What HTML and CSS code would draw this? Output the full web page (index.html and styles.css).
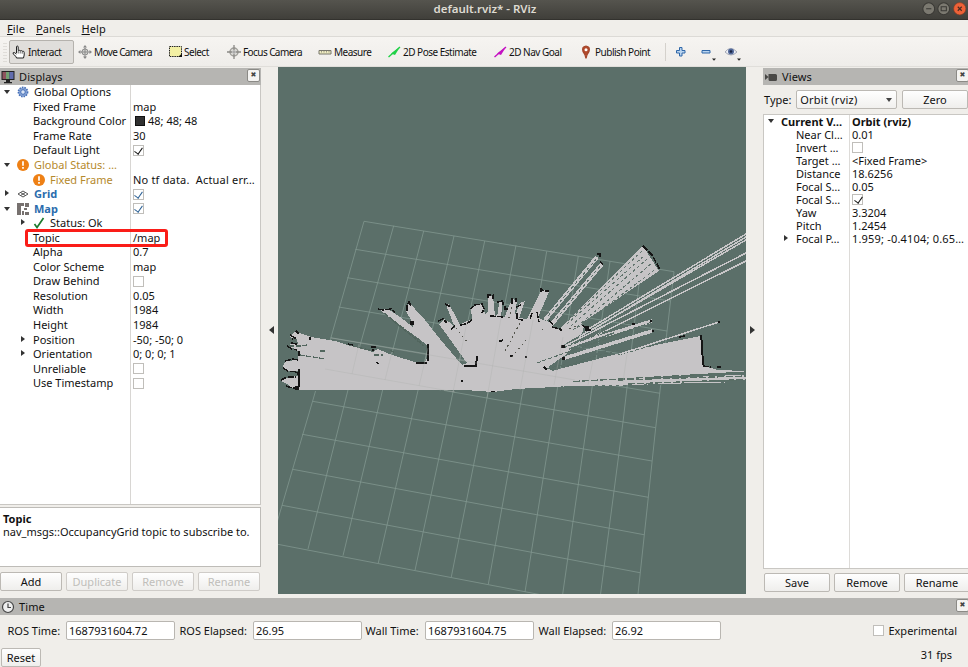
FILE: index.html
```html
<!DOCTYPE html>
<html lang="en">
<head>
<meta charset="utf-8">
<title>default.rviz* - RViz</title>
<link rel="stylesheet" href="styles.css">
</head>
<body>
<div class="window">
  <header class="titlebar">
    <span class="caption">default.rviz* - RViz</span>
    <div class="winbtns">
      <svg viewBox="0 0 13 13"><circle cx="6.5" cy="6.5" r="5.7" fill="#7b7970" stroke="#3a3935"/><path d="M4 6.5h5" stroke="#3a3935"/></svg>
      <svg viewBox="0 0 13 13"><circle cx="6.5" cy="6.5" r="5.7" fill="#7b7970" stroke="#3a3935"/><path d="M4 4.5h5v4H4z" fill="none" stroke="#3a3935"/></svg>
      <svg viewBox="0 0 13 13"><circle cx="6.5" cy="6.5" r="5.9" fill="#ee6238" stroke="#8b3c22" stroke-width=".6"/><path d="M4.6 4.6l3.8 3.8M8.400 4.600L4.600 8.400" stroke="#4a2c22" stroke-width="1.1"/></svg>
    </div>
  </header>
  <nav class="menubar"><span><u>F</u>ile</span><span><u>P</u>anels</span><span><u>H</u>elp</span></nav>
  <div class="toolbar">
    <i class="grip"></i>
    <div class="tool active"><svg viewBox="0 0 14 14"><path d="M4.500 8V2q0-1 .8-1T6.200 2v3.500q1-.8 2 .3 1.200-.7 2 .4 2-.4 2 1.300v2.500L11.500 13H4.500L4 11.500 1.200 9q-.5-1.800 1-1.500L4.500 9" fill="#fff" stroke="#222"/><path d="M6.200 6v2.500M8.200 6.200v2.300M10.200 6.500v2.200" stroke="#222" stroke-width=".7"/></svg><span>Interact</span></div>
    <div class="tool t2"><svg viewBox="0 0 14 14"><path d="M7 1v12M1 7h12" stroke="#777" stroke-dasharray="1.500 .5"/><path d="M7 0l2 2.500H5zM7 14l2-2.500H5zM0 7l2.500-2v4zM14 7l-2.500-2v4z" fill="#888"/><circle cx="7" cy="7" r="3.100" fill="#d0d0cd" stroke="#888"/><path d="M4.500 7h5M7 4.500v5" stroke="#777" stroke-width=".7"/></svg><span>Move Camera</span></div>
    <div class="tool t3"><svg viewBox="0 0 14 14"><path d="M1.500 1.500h12v10h-12z" fill="#f3f0a4" stroke="#222" stroke-dasharray="1.500 .8"/><path d="M14 8.500V12h-4z" fill="#111"/></svg><span>Select</span></div>
    <div class="tool t4"><svg viewBox="0 0 14 14"><circle cx="7" cy="7" r="4" fill="#deddda" stroke="#a09f9a" stroke-width="1.500"/><circle cx="7" cy="7" r="1.800" fill="#aaa"/><path d="M7 0v5M7 9v5M0 7h5M9 7h5" stroke="#8a8985" stroke-width="1.300"/></svg><span>Focus Camera</span></div>
    <div class="tool t5"><svg viewBox="0 0 14 14"><path d="M1 5.500h12v3.500H1z" fill="#f0edc2" stroke="#77766b"/><path d="M3.500 6v1.500M6 6v1.500M8.500 6v1.500M11 6v1.500" stroke="#77766b" stroke-width=".7"/></svg><span>Measure</span></div>
    <div class="tool t6"><svg viewBox="0 0 14 14"><path d="M1.500 12L13 2" stroke="#20d147" stroke-width="1.400"/><path d="M4 8.500L13 2 8 10z" fill="#20d147"/></svg><span>2D Pose Estimate</span></div>
    <div class="tool t7"><svg viewBox="0 0 14 14"><path d="M1.500 12L13 2" stroke="#c411c2" stroke-width="1.400"/><path d="M4 8.500L13 2 8 10z" fill="#c411c2"/></svg><span>2D Nav Goal</span></div>
    <div class="tool t8"><svg viewBox="0 0 14 14"><path d="M7 13.500Q6.500 9.500 4 6.500 2.500 1.500 7 1q4.500.5 3 5.500Q7.500 9.500 7 13.500" fill="#b34a2c" stroke="#a5452a" stroke-width="1.200"/><circle cx="7" cy="4.700" r="1.500" fill="#fff"/></svg><span>Publish Point</span></div>
    <i class="sep"></i>
    <svg class="mini" viewBox="0 0 12 12"><path d="M4.500 1.500h2.500v3h3v2.500H7v3H4.500V7h-3V4.500h3z" fill="#b9d4ef" stroke="#2f67a8"/></svg>
    <svg class="mini m2" viewBox="0 0 16 18"><path d="M1.500 7.500h8V10h-8z" fill="#b9d4ef" stroke="#2f67a8"/><path d="M11.500 15.500h4l-2 2.200z" fill="#222"/></svg>
    <svg class="mini m3" viewBox="0 0 18 18"><path d="M1 9q5.500-7 12 0-6 6-12 0z" fill="#eef1f8" stroke="#a5a9b5"/><circle cx="7" cy="8.500" r="3" fill="#52699a"/><circle cx="7" cy="8.500" r="1.300" fill="#1c2543"/><path d="M13 15.500h4l-2 2.200z" fill="#222"/></svg>
  </div>

  <main class="body">
    <section class="displays">
      <div class="dockhead">
        <svg viewBox="0 0 14 14"><path d="M.5 1h13v9H.5z" fill="#222"/><path d="M1.500 2h4v7h-4z" fill="#8e545e"/><path d="M5 2h3.500v7H5z" fill="#72a272"/><path d="M8.500 2h4v7h-4z" fill="#616cae"/><path d="M5 10h4v2H5zM3 12h8v1.300H3z" fill="#222"/></svg>
        <span>Displays</span><b class="close"></b>
      </div>
      <div class="tree dtree">
        <div class="row"><div class="k l0"><i class="ar dn"></i><svg class="ic" viewBox="0 0 12 12"><circle cx="6" cy="6" r="4.600" fill="#8aa6d6" stroke="#456fb8" stroke-width="1.600" stroke-dasharray="1.500 1"/><circle cx="6" cy="6" r="2.300" fill="#dbe5f5" stroke="#456fb8"/></svg>Global Options</div><div class="v"></div></div>
        <div class="row"><div class="k l1">Fixed Frame</div><div class="v">map</div></div>
        <div class="row"><div class="k l1">Background Color</div><div class="v"><i class="swatch"></i>48; 48; 48</div></div>
        <div class="row"><div class="k l1">Frame Rate</div><div class="v">30</div></div>
        <div class="row"><div class="k l1">Default Light</div><div class="v"><i class="cb on"></i></div></div>
        <div class="row warn"><div class="k l0"><i class="ar dn"></i><svg class="ic" viewBox="0 0 12 12"><circle cx="6" cy="6" r="6" fill="#ee8015"/><path d="M6 2.200v4.600M6 8v1.800" stroke="#fff" stroke-width="1.700"/></svg>Global Status: …</div><div class="v"></div></div>
        <div class="row"><div class="k l2 warn"><svg class="ic" viewBox="0 0 12 12"><circle cx="6" cy="6" r="6" fill="#ee8015"/><path d="M6 2.200v4.600M6 8v1.800" stroke="#fff" stroke-width="1.700"/></svg>Fixed Frame</div><div class="v wide">No tf data.&nbsp; Actual err…</div></div>
        <div class="row"><div class="k l0 disp"><i class="ar rt"></i><svg class="ic" viewBox="0 0 12 12"><path d="M1 6l5-3 5 3-5 3zM3.500 4.500l5 3M8.500 4.500l-5 3" fill="none" stroke="#555"/></svg>Grid</div><div class="v"><i class="cb on blue"></i></div></div>
        <div class="row"><div class="k l0 disp"><i class="ar dn"></i><svg class="ic" viewBox="0 0 12 12"><path d="M0 0h7v3H4v3H0zM8 0h4v4H8zM0 6h4v6H0zM5 8h2v4H5zM7 5h3v2H7zM8 9h4v3H8z" fill="#77716f"/></svg>Map</div><div class="v"><i class="cb on blue"></i></div></div>
        <div class="row"><div class="k l2"><i class="ar rt in"></i><svg class="ic" viewBox="0 0 12 12"><path d="M1.500 7l2.500 3.500L10.500 1" fill="none" stroke="#1c7a2e" stroke-width="1.700"/></svg>Status: Ok</div><div class="v"></div></div>
        <div class="row"><div class="k l1">Topic</div><div class="v">/map</div><i class="mark"></i></div>
        <div class="row"><div class="k l1">Alpha</div><div class="v">0.7</div></div>
        <div class="row"><div class="k l1">Color Scheme</div><div class="v">map</div></div>
        <div class="row"><div class="k l1">Draw Behind</div><div class="v"><i class="cb"></i></div></div>
        <div class="row"><div class="k l1">Resolution</div><div class="v">0.05</div></div>
        <div class="row"><div class="k l1">Width</div><div class="v">1984</div></div>
        <div class="row"><div class="k l1">Height</div><div class="v">1984</div></div>
        <div class="row"><div class="k l1"><i class="ar rt in"></i>Position</div><div class="v">-50; -50; 0</div></div>
        <div class="row"><div class="k l1"><i class="ar rt in"></i>Orientation</div><div class="v">0; 0; 0; 1</div></div>
        <div class="row"><div class="k l1">Unreliable</div><div class="v"><i class="cb"></i></div></div>
        <div class="row"><div class="k l1">Use Timestamp</div><div class="v"><i class="cb"></i></div></div>
      </div>
      <div class="help"><b>Topic</b><p>nav_msgs::OccupancyGrid topic to subscribe to.</p></div>
      <div class="btns"><span class="btn">Add</span><span class="btn off">Duplicate</span><span class="btn off">Remove</span><span class="btn off">Rename</span></div>
    </section>

    <div class="gutter lgut"><svg viewBox="0 0 5 8"><path d="M5 0v8L0 4z"/></svg></div>

    <svg class="view3d" viewBox="278 67 468 527">
      <g stroke="#82978f" stroke-width=".8" fill="none">
        <path d="M364 221.300L674 271.700M355.300 249.300L670 301M347.300 277.700L667 331M338.700 307L664 361M330.700 337.700L660 393.300M322 369L655.700 427.700M312.700 401.300L652 461M302.300 434.300L648.300 497.300M292.700 469.300L644 534.700M282 505.300L640 572.700M271 543L636 613"/>
        <path d="M364 221.300L322 369 271 543M393.700 225.700L352 374 308 549M423.700 231L385 380 343 555.700M454 236L419 386 378.300 563M484.700 241L453 392 415 570.300M516 245.300L487 398 451.300 577M546.700 251.300L520.500 404 488.300 584.300M578.300 256L554 410 525 592M610 261.300L588 416 562 599M641 266.700L623 422 599 606M674 271.700L655.700 427.700 636 613"/>
      </g>
      <g shape-rendering="crispEdges">
        <g fill="#c6c4c6">
          <!-- swept free space -->
          <path d="M295 331L299 333 311 337 335 341 348 345 373 352 378 349 392 355 415 362 424 363 428 357 428 346 418 338 398 324 380 310 388 309 400 317 413 327 411 320 406 311 409 303 415 309 425 320 440 339 462 365 467 363 439 324 444 319 452 324 457 331 461 324 472 319 471 308 475 304 482 304 485 314 488 312 488 296 493 296 495 316 498 313 499 301 503 302 501 316 505 317 508 308 513 299 517 301 515 313 519 318 527 319 535 312 540 319 550 322 553 328 560 329 566 322 584 326 582 334 563 345 575 345 564 356 548 367 552 371 605 357 640 348 700 336 704 366 718 370 746 371 746 382 660 384 610 386 573 386 518 389 503 391 491 392 465 390 299 390 292 388 287 384 281 381 289 377 298 376 299 371 286 371 283 366 286 361 298 360 299 352 293 348 287 347 291 343 298 344 297 339 289 337Z"/>
          <path d="M446 305l3-1 14 26-6 3zM519 318l6-17-5 2-6 15zM526 321l16-32 7 3-14 32z"/>
          <path d="M556 332L643 246 659 271 583 322 572 333Z"/>
        </g>
        <path d="M568 321L643 250M567 324L645 255M571 326L647 259M573 330L652 263M577 328L656 269" stroke="#62746e" stroke-width="1" stroke-dasharray="3 2.500" fill="none"/>
        <path d="M545 320l52-63M551 325l51-61" stroke="#c8c6c8" stroke-width="4" fill="none"/>
        <path d="M548 316l49-58M556 319l45-54" stroke="#5b6f69" stroke-width="1" stroke-dasharray="3 3"/>
        <path d="M585 331L746 234M579 337L746 240M565 346L746 253M563 352L746 261M590 331L746 237" stroke="#c8c6c8" stroke-width="1.500" fill="none"/>
        <path d="M564 348L652 321M565 358L652 331" stroke="#c8c6c8" stroke-width="3.500"/>
        <path d="M563 348L633 321M574 351L652 322M537 363L640 326M546 369L620 350M550 370l34-9M618 355l40-11" stroke="#586d65" stroke-width="1" stroke-dasharray="4 2"/>
        <path d="M567 353L610 340M569 361L606 351 566 364zM569 349l45-16" stroke="#5b6f69" fill="#5b6f69" stroke-width="1.500"/>
        <path d="M620 354L719 322" stroke="#c8c6c8" stroke-width="1.500"/>
        <path d="M640 378L746 371.500v3L650 379zM650 382.500l96-3v2z" fill="#5b6f69"/>
        <path d="M573 381.500L746 372M618 380L746 376M628 384L746 379.500" stroke="#596e65" stroke-width="1.300" stroke-dasharray="7 2"/>
        <path d="M346 344l27 7 4-4M289 346h12l6-1M300 355l25 4M374 355h9M320 351h7M390 350l5 3M384 313l37 29M392 320l32 26" stroke="#52665e" stroke-width="1.300" stroke-dasharray="5 1.500" fill="none"/>
        <path d="M301 390.500h164l26 2 27-3 55-3 55-1 118-3" stroke="#5b6f69" stroke-width="1.300" stroke-dasharray="3 4" fill="none"/>
        <!-- occupied cells -->
        <g stroke="#151515" stroke-width="1.500" fill="none" stroke-dasharray="6 1.500">
          <path d="M296 331l3 3M290 335l5 3-3 1M287 346l5 3 5 1M291 343l6 1M285 361l8-2 5 1M283 368l5 3 9 1 1 3M281 380l6-3h9M286 386l6 2h6M299 351v5M299 369v6M348 344l5 1M371 347h5"/>
          <path d="M378 309l5 1 8-1 4 3M407 311v-6l2-3 2 4M438 321l5-2 4 4M445 304l4 2 1 3M451 329l4-3M460 325l6-1 6-4M471 309l2-3M474 305l8-1 2 5-2 4M488 298v-3h5v4M497 302l6-1v4M490 316l15 1M508 309h-3v-3M512 304v-5h4v3M516 307l7-3M517 313v6l6 1M532 313l-2 6M537 312l2 10M541 292v-3l3 2h5M549 321l4 3M552 327l8 2 2 2M583 325l4 5h4"/>
          <path d="M643 246l4 4 5 5 5 9 3 6M597 254h3v3M600 262l3 2M651 320v2M652 331h2M679 337l6-1M703 366l8 1M717 367h4M718 322h2"/>
        </g>
        <path d="M416 362.500h11M428 361v-17M464 366h12l1-10M701 335l1 10 1 20M299 373v14M296 387h3M544 367l3 3" stroke="#151515" stroke-width="2" fill="none"/>
        <path d="M410 321h4v4h-4zM499 340h3v2h-3zM461 380h2v2h-2zM502 339h1v2h-1zM376 362l3 1-1 2zM295 386h4v4h-4zM585 326h4v5h-4zM561 345h4v3h-4zM562 357h3v3h-3zM510 355h3v2h-3zM525 356h2v2h-2zM632 323h3v2h-3zM309 337h2v3h-2zM372 349h2v2h-2zM491 391h4v1h-4z" fill="#151515"/>
        <path d="M520 323l-16 30M526 340l-14 17M456 328l12 15M512 307l-4 14M569 329l7-3M543 329l-4 4" stroke="#54554d" stroke-width="1" stroke-dasharray="2 3"/>
      </g>
      <path d="M325 369l130 23M331 338l244 42M352 374l7-30M385 380l7-28M419 386l9-38M453 392l14-70M487 398l14-80M520 390l13-70M554 385l9-48M588 385l5-25M623 382l4-28" stroke="#aeb0ae" stroke-width=".6" opacity=".6" fill="none"/>
    </svg>

    <div class="gutter rgut"><svg viewBox="0 0 5 8"><path d="M0 0v8l5-4z"/></svg></div>

    <section class="views">
      <div class="dockhead">
        <svg viewBox="0 0 14 14"><path d="M4.500 4h7q1.500 0 1.500 1.500v4q0 1.500-1.500 1.500H6q-1.500 0-1.500-1.500zM1 4l3.500 3L1 10z" fill="#494846"/></svg>
        <span>Views</span><b class="close"></b>
      </div>
      <div class="typebar"><label>Type:</label><span class="combo">Orbit (rviz)<i></i></span><span class="btn zero">Zero</span></div>
      <div class="tree vtree">
        <div class="row bold"><div class="k"><i class="ar dn"></i>Current V…</div><div class="v">Orbit (rviz)</div></div>
        <div class="row"><div class="k c">Near Cl…</div><div class="v">0.01</div></div>
        <div class="row"><div class="k c">Invert …</div><div class="v"><i class="cb"></i></div></div>
        <div class="row"><div class="k c">Target …</div><div class="v">&lt;Fixed Frame&gt;</div></div>
        <div class="row"><div class="k c">Distance</div><div class="v">18.6256</div></div>
        <div class="row"><div class="k c">Focal S…</div><div class="v">0.05</div></div>
        <div class="row"><div class="k c">Focal S…</div><div class="v"><i class="cb on"></i></div></div>
        <div class="row"><div class="k c">Yaw</div><div class="v">3.3204</div></div>
        <div class="row"><div class="k c">Pitch</div><div class="v">1.2454</div></div>
        <div class="row"><div class="k c"><i class="ar rt"></i>Focal P…</div><div class="v wide">1.959; -0.4104; 0.65…</div></div>
      </div>
      <div class="btns"><span class="btn">Save</span><span class="btn">Remove</span><span class="btn">Rename</span></div>
    </section>
  </main>

  <section class="time">
    <div class="dockhead">
      <svg viewBox="0 0 14 14"><circle cx="7" cy="7" r="5.500" fill="#eee" stroke="#444" stroke-width="1.200"/><path d="M7 3.500V7.500h3" fill="none" stroke="#444" stroke-width="1.200"/></svg>
      <span>Time</span><b class="close"></b>
    </div>
    <div class="fields">
      <label>ROS Time:</label><span class="input">1687931604.72</span>
      <label>ROS Elapsed:</label><span class="input">26.95</span>
      <label>Wall Time:</label><span class="input">1687931604.75</span>
      <label>Wall Elapsed:</label><span class="input">26.92</span>
      <span class="exp"><i class="cb"></i>Experimental</span>
    </div>
    <div class="foot"><span class="btn">Reset</span><span class="fps">31 fps</span></div>
  </section>
</div>
</body>
</html>
```
FILE: styles.css
```css
* { box-sizing: border-box; }
body { margin: 0; }
.window {
  width: 968px; height: 667px; overflow: hidden;
  display: flex; flex-direction: column;
  background: #f0eeea; color: #111;
  font: 11px/14px "Noto Sans", "Open Sans", sans-serif;
  white-space: nowrap;
}
svg { display: block; flex: none; }
i, b.close { font-style: normal; flex: none; }

.titlebar {
  flex: none; height: 20px; display: flex; align-items: center; position: relative;
  background: linear-gradient(#55544e, #403f3a); border-bottom: 1px solid #33322e;
}
.caption { flex: 1; text-align: center; color: #dfdbd2; font-weight: 600; font-size: 11.500px; padding-left: 2px; line-height: 16px; padding-bottom: 2px; }
.winbtns { position: absolute; right: 2px; top: 2px; display: flex; gap: 2px; }
.winbtns svg { width: 13.500px; height: 13.500px; }

.menubar { flex: none; height: 17px; display: flex; gap: 11px; padding: 2px 0 0 7px; border-bottom: 1px solid #dcdad6; letter-spacing: .1px; }
.menubar u { text-underline-offset: 1px; }

.toolbar {
  flex: none; height: 30px; display: grid; align-items: center;
  grid-template-columns: 9px 69px 90px 59px 91px 69px 106px 86px 86px 10px 25px 24px 20px;
  background: linear-gradient(#f6f4f1, #efedea);
  border-bottom: 1px solid #e0deda;
}
.grip { width: 4px; height: 20px; margin-left: 3px; background: radial-gradient(#c8c5c0 30%, transparent 40%) 0 0/2px 3px; }
.tool { display: flex; align-items: center; gap: 2px; font-size: 10px; letter-spacing: -.5px; height: 24px; }
.tool svg { width: 14px; height: 14px; }
.t2 { letter-spacing: -.62px; }
.t4 { letter-spacing: -.58px; }
.tool.active { width: 65px; padding-left: 2px; border: 1px solid #b5b2ad; border-radius: 2px; background: #e0dedb; letter-spacing: -.4px; }
.sep { width: 1px; height: 18px; background: #d4d1cc; }
.mini { width: 12px; height: 12px; }
.mini.m2 { width: 17px; height: 18px; }
.mini.m3 { width: 18px; height: 18px; }

.body { flex: none; height: 530px; display: grid; grid-template-columns: 261px 17px 468px 17px 205px; }
.dockhead { flex: none; height: 17px; display: flex; align-items: center; padding: 0 0 0 1px; gap: 4px; background: #b6b5b2; position: relative; letter-spacing: .1px; }
.dockhead svg { width: 14px; height: 14px; }
.close { position: absolute; right: 1px; top: 1px; width: 13px; height: 13px; border: 1px solid #8b8a86; border-radius: 2px; background: #f4f3f1; }
.close::after { content: "✖"; font: 7px/11px "DejaVu Sans", sans-serif; display: block; text-align: center; color: #444; }

.displays, .views { display: flex; flex-direction: column; min-width: 0; padding-top: 1px; }
.tree { background: #fff; border: 1px solid #c9c7c3; position: relative; border-left: 0; overflow: hidden; }
.row { display: flex; align-items: center; position: relative; }
.k { flex: none; height: 100%; display: flex; align-items: center; position: relative; }
.v { flex: 1; height: 100%; display: flex; align-items: center; padding-left: 2px; }
.dtree { height: 420px; border-top: 0; background: linear-gradient(#d8d6d3, #d8d6d3) 130px 0/1px 100% no-repeat #fff; }
.dtree .row { height: 14.560px; }
.dtree .k { width: 131px; }
.l0 { padding-left: 17px; gap: 5px; }
.l1 { padding-left: 33px; }
.l2 { padding-left: 33px; gap: 5px; }
.ic { width: 12px; height: 12px; }
.ar { position: absolute; top: 50%; width: 0; height: 0; border: solid transparent; }
.dn { left: 4px; margin-top: -2px; border-width: 4px 3.500px 0; border-top-color: #333; }
.rt { left: 5px; margin-top: -4px; border-width: 3.500px 0 3.500px 4px; border-left-color: #333; }
.in { left: 21px; }
.warn { color: #b5892c; }
.wide { letter-spacing: .19px; }
.disp { color: #2a6cad; font-weight: 700; }
.swatch { width: 10px; height: 10px; background: #303030; border: 1px solid #111; margin: 0 3px 0 2px; }
.cb { width: 11px; height: 11px; border: 1px solid #c0beba; background: #fff; display: block; position: relative; }
.dtree .cb { margin-left: -.5px; }
.cb.on::after { content: ""; position: absolute; left: 2.500px; top: 0; width: 4px; height: 7px; border: solid #111; border-width: 0 1.600px 1.600px 0; transform: rotate(35deg); }
.cb.blue::after { border-color: #2a5f94; }
.mark { position: absolute; left: 25px; top: -1.500px; width: 143px; height: 18px; border: 3px solid #fa1d18; border-radius: 3px; z-index: 2; }
.help { height: 60px; margin-top: 2px; padding: 4px 2px 0 3px; background: #fff; border: 1px solid #bebcb8; border-left: 0; line-height: 13px; }
.help b { display: block; line-height: 13px; }
.help p { margin: 0; }
.btns { display: flex; }
.btn { display: flex; align-items: center; justify-content: center; height: 19px; flex: none; background: linear-gradient(#fefefe, #efeeec); border: 1px solid #bcb9b4; border-radius: 2px; }
.off { color: #c0beba; border-color: #cfccc8; }
.displays .btns { gap: 4px; padding: 5px 0 0; }
.displays .btn { width: 62px; }

.gutter { display: flex; align-items: center; padding-bottom: 4px; }
.gutter svg { width: 5px; height: 8px; fill: #333; }
.lgut { padding-left: 8px; }
.rgut { padding-left: 4px; }
.view3d { width: 468px; height: 527px; background: #5b6f69; }

.views .dockhead { width: 205px; }
.views .close { right: -1px; }
.time .close { right: -1px; }
.typebar { flex: none; display: flex; align-items: center; height: 29px; padding: 0 0 0 1px; }
.typebar label { width: 33px; }
.combo { width: 106px; height: 19px; border: 1px solid #bcb9b4; border-radius: 2px; background: linear-gradient(#fff, #f1f0ee); display: flex; align-items: center; justify-content: space-between; padding: 0 4px 0 3px; letter-spacing: .25px; }
.combo i { border: solid transparent; border-width: 4px 3px 0; border-top-color: #444; }
.zero { width: 62px; margin-left: 5px; }
.vtree { height: 455px; flex: none; border-left: 1px solid #c9c7c3; width: 210px; background: linear-gradient(#dddbd8, #dddbd8) 85px 0/1px 100% no-repeat #fff; }
.vtree .row { height: 13.050px; line-height: 13px; top: -.4px; }
.vtree .k { width: 86px; padding-left: 17px; }
.vtree .k.c { padding-left: 32px; }
.vtree .rt { left: 20px; }
.bold { font-weight: 700; }
.views .combo { margin-left: 1px; }
.views .btns { gap: 4px; padding: 4px 0 0 1px; }
.views .btn { width: 66px; }

.time { flex: none; padding-top: 1px; }
.fields { display: grid; grid-template-columns: 58px 114px 73px 113px 59px 114px 73px 109px 1fr; align-items: center; padding: 6px 0 0 8px; }
.fields label { margin-left: -.5px; }
.input { width: 109px; height: 19px; padding-left: 2px; display: flex; align-items: center; background: #fff; border: 1px solid #b9b6b1; border-radius: 2px; }
.exp { display: flex; align-items: center; gap: 4px; justify-self: end; padding-right: 11px; }
.foot { display: flex; justify-content: space-between; padding: 8px 16px 0 1px; }
.foot .btn { width: 40px; }
```
